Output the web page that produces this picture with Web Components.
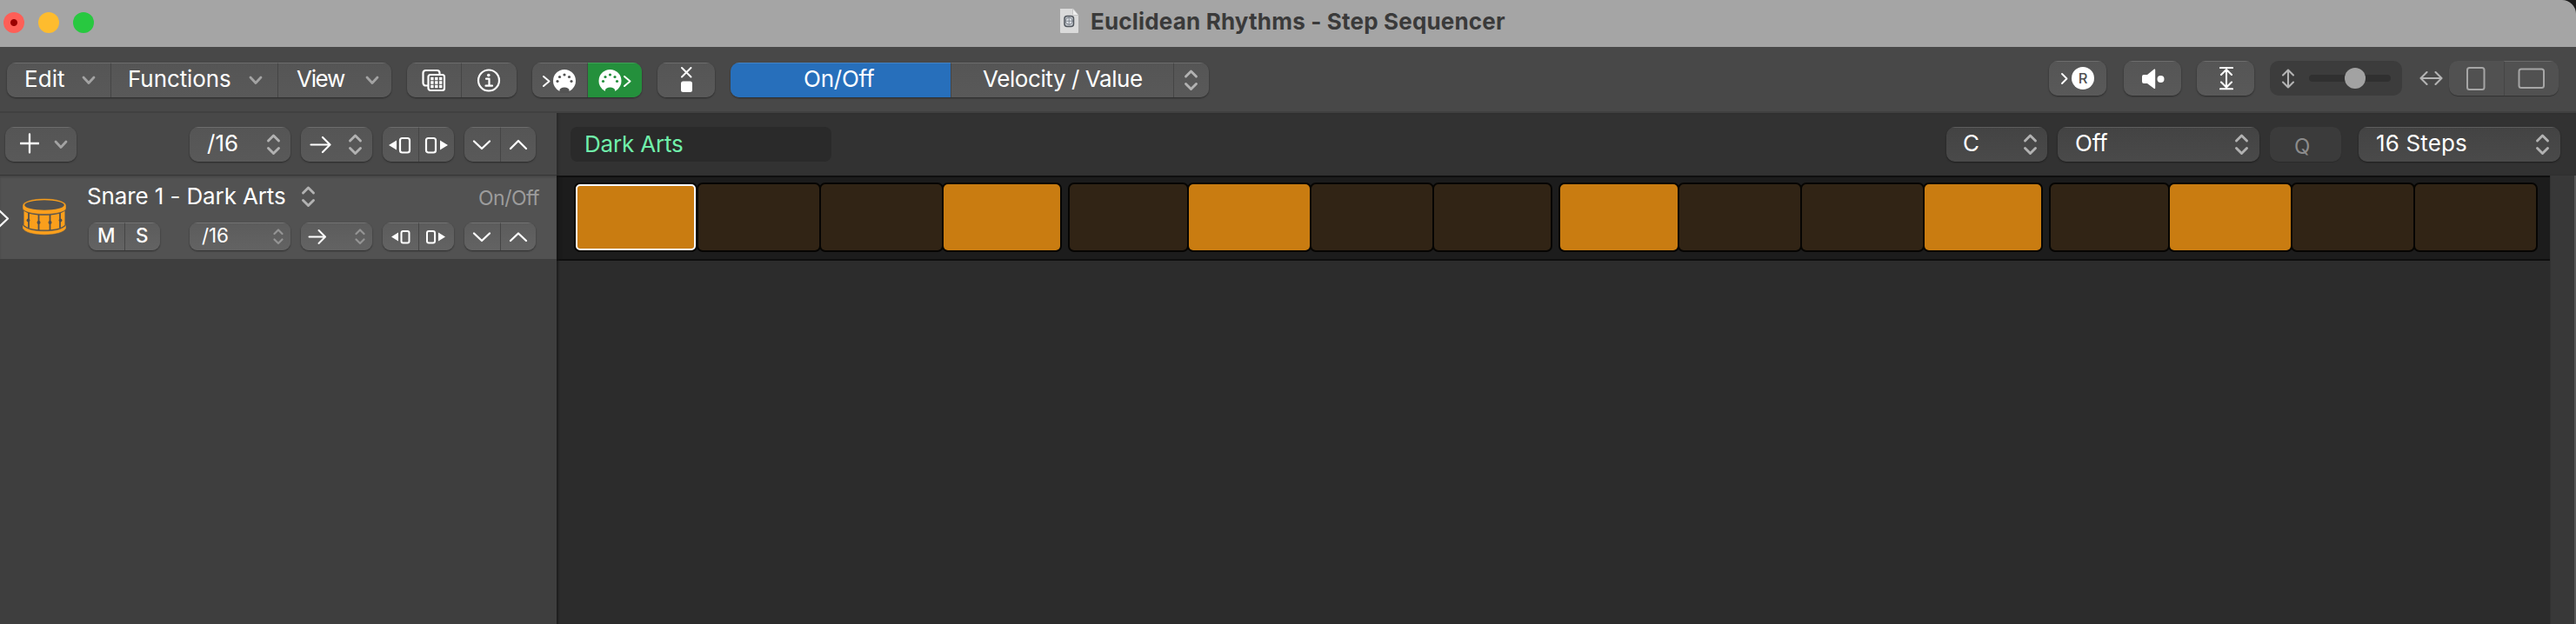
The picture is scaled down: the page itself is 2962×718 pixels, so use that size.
<!DOCTYPE html>
<html lang="en">
<head>
<meta charset="utf-8">
<title>Euclidean Rhythms - Step Sequencer</title>
<style>
  html, body {
    margin: 0;
    height: 100%;
    background: #1b1b1b;
  }
  body {
    font-family: Inter, "Liberation Sans", sans-serif;
    font-size: 26px;
    color: #fff;
    overflow: hidden;
  }
</style>
</head>
<body>
<step-sequencer></step-sequencer>

<script>
const CHEVRON = '#a3a3a3';

// every icon is drawn on a box as tall as its control: [width, height, markup]
const midiPlug = (cx, bg) => `
  <circle cx="${cx}" cy="21" r="13" fill="#fff" stroke="none"/>
  <path d="M${cx - 5.5} 35V31.500a5.500 3 0 0 1 11 0V35z" fill="${bg}" stroke="none"/>
  <g fill="${bg}" stroke="none">
    <circle cx="${cx - 8}" cy="21.500" r="1.600"/><circle cx="${cx - 5.500}" cy="16.500" r="1.600"/>
    <circle cx="${cx}" cy="14" r="1.600"/>
    <circle cx="${cx + 5.500}" cy="16.500" r="1.600"/><circle cx="${cx + 8}" cy="21.500" r="1.600"/>
  </g>`;

const ICONS = {
  'chevron': [16, 40, `<path d="M2 17l6 6.500 6-6.500" stroke="${CHEVRON}" stroke-width="2.800"/>`],
  'updown': [17, 40, '<path d="M2.500 16l6-6 6 6M2.500 24.500l6 6 6-6" stroke="#b2b2b2" stroke-width="2.900"/>'],
  'updown-small': [12, 32, '<path d="M1.500 13l4.500-4.500 4.500 4.500M1.500 19.500l4.500 4.500 4.500-4.500" stroke="#949494" stroke-width="2.200"/>'],
  'plus': [22, 40, '<path d="M.500 19h21M11 8.500v21" stroke-width="2.300"/>'],
  'arrow': [25, 40, '<path d="M1.500 20.500h22M15 12l8.500 8.500-8.500 8.500" stroke-width="2.200"/>'],
  'arrow-small': [22, 32, '<path d="M1.500 16.500h18M12.500 9l7.500 7.500-7.500 7.500" stroke-width="2"/>'],
  'nudge-left': [28, 40, '<path d="M1 21l9-5.500v11z" fill="#fff" stroke="none"/><rect x="14" y="13" width="11" height="16.500" rx="2.500" stroke-width="2.200"/>'],
  'nudge-right': [28, 40, '<path d="M27 21l-9-5.500v11z" fill="#fff" stroke="none"/><rect x="2" y="13" width="11" height="16.500" rx="2.500" stroke-width="2.200"/>'],
  'nudge-left-small': [25, 32, '<path d="M1 16.500l8-5v10z" fill="#fff" stroke="none"/><rect x="12.500" y="10" width="9" height="13.500" rx="2" stroke-width="2"/>'],
  'nudge-right-small': [25, 32, '<path d="M24 16.500l-8-5v10z" fill="#fff" stroke="none"/><rect x="3" y="10" width="9" height="13.500" rx="2" stroke-width="2"/>'],
  'down': [22, 40, '<path d="M2 16.500l9 8.500 9-8.500" stroke-width="2.300"/>'],
  'up': [22, 40, '<path d="M2 25l9-9 9 9" stroke-width="2.300"/>'],
  'down-small': [22, 32, '<path d="M2 12.500l9 8.500 9-8.500" stroke-width="2.300"/>'],
  'up-small': [22, 32, '<path d="M2 21l9-8.500 9 8.500" stroke-width="2.300"/>'],
  'pattern': [28, 40, `
    <path d="M7 26.500H4.500a3 3 0 0 1-3-3V12a3 3 0 0 1 3-3h13a3 3 0 0 1 3 3v1.500" stroke-width="2.200"/>
    <rect x="7.500" y="14" width="18.500" height="18" rx="2.500" stroke-width="2.200"/>
    <path d="M10.200 18.500h13.200M10.200 23h13.200M10.200 27.500h13.200" stroke-width="3.400" stroke-dasharray="3.400 1.500" stroke-linecap="butt"/>`],
  'info': [28, 40, `
    <circle cx="14" cy="20.500" r="12" stroke-width="2.200"/>
    <circle cx="13.800" cy="14.500" r="1.800" fill="#fff" stroke="none"/>
    <path d="M11 18.700h3.500v7.500M10.500 26.700h7.500" stroke-width="2.200"/>`],
  'midi-in': [42, 40, '<path d="M2 16l6.500 5.500L2 27" stroke-width="2"/>' + midiPlug(26, '#535353')],
  'midi-out': [42, 40, '<path d="M32 16l6.500 5.500L32 27" stroke-width="2"/>' + midiPlug(15.5, '#24903c')],
  'erase': [15, 40, '<path d="M2 6l10.500 10.500M12.500 6L2 16.500" stroke-width="2"/><rect x="1" y="21.500" width="13" height="12.500" rx="2.500" fill="#fff" stroke="none"/>'],
  'record': [40, 40, `
    <path d="M2 15l5.500 5.500L2 26" stroke-width="1.900"/>
    <circle cx="26" cy="20" r="13" fill="#fff" stroke="none"/>
    <text x="26" y="26" text-anchor="middle" font-size="16.500" font-weight="500" fill="#505050" stroke="none">R</text>`],
  'speaker': [28, 40, '<path d="M1 18a2 2 0 0 1 2-2h4l8-6.500a.800.800 0 0 1 1.200.700v21a.800.800 0 0 1-1.200.700L7 26H3a2 2 0 0 1-2-2z" fill="#fff" stroke="none"/><circle cx="22.500" cy="21" r="4" fill="#fff" stroke="none"/>'],
  'fit-height': [16, 40, '<path d="M1 8h14M1 32.300h14M8 10v20M2 16l6-6 6 6M2 24.500l6 6 6-6" stroke-width="2.100"/>'],
  'height': [16, 40, '<path d="M8 11v19M2 16.500l6-6 6 6M2 24.500l6 6 6-6" stroke="#b4b4b4" stroke-width="2.100"/>'],
  'width': [27, 40, '<path d="M2 20h23M8.500 13L1.500 20l7 7M18.500 13l7 7-7 7" stroke="#b4b4b4" stroke-width="2.100"/>'],
  'portrait': [22, 40, '<rect x="1" y="8" width="19.500" height="25" rx="2.500" stroke="#a6a6a6" stroke-width="2"/>'],
  'landscape': [32, 40, '<rect x="1.500" y="9.500" width="28.500" height="21.500" rx="2.500" stroke="#a6a6a6" stroke-width="2"/>'],
  'disclosure': [12, 96, '<path d="M-1 40l10 9.500L-1 59" stroke-width="2.200"/>'],
  // rim, shell with tension rods, bottom hoop
  'drum': [52, 44, `
    <path d="M2.500 14.500c4 3.500 13 5.300 23.500 5.300s19.500-1.800 23.500-5.300V31c-4 3.800-13 5.600-23.500 5.600S6.500 34.800 2.500 31z" fill="#fa9f1c" stroke="none"/>
    <path d="M8 17v17.500M19.500 19v18M32.500 19v18M44 17v17.500" stroke="#505050" stroke-width="1.800" stroke-linecap="butt"/>
    <g fill="#505050" stroke="none"><circle cx="7.500" cy="25.500" r="1.900"/><circle cx="19.500" cy="28" r="2"/><circle cx="32.500" cy="28" r="2"/><circle cx="44.500" cy="25.500" r="1.900"/></g>
    <path d="M1 30.500c2.500 4.700 12 7.300 25 7.300s22.500-2.600 25-7.300v4.200c-2.500 4.700-12 7.500-25 7.500S3.500 39.400 1 34.700z" fill="#fa9f1c" stroke="#505050" stroke-width=".500"/>
    <path d="M1 8.500C1 3.800 12 .500 26 .500s25 3.300 25 8v3.200c0 3.900-11 6.800-25 6.800S1 15.600 1 11.700z" fill="#fa9f1c" stroke="#505050" stroke-width=".500"/>
    <ellipse cx="26" cy="8" rx="22.800" ry="5.700" fill="#505050" stroke="none"/>`],
  'document': [26, 30, `
    <path d="M2 1h15l6 7v20a1 1 0 0 1-1 1H3a1 1 0 0 1-1-1V2a1 1 0 0 1 0-1z" fill="#dadada" stroke="none"/>
    <path d="M16.500 1v6.500a1 1 0 0 0 1 1H23z" fill="#eee" stroke="#b9b9b9" stroke-width=".700"/>
    <rect x="7" y="9.500" width="10.500" height="12" rx="3" fill="#c3c8ce" stroke="#51565d" stroke-width="1.500"/>
    <circle cx="12.200" cy="15.200" r="4" fill="#dfe3e8" stroke="#6d737c" stroke-width=".900"/>
    <path d="M12.200 11v8.400M8 15.200h8.400" stroke="#7c828b" stroke-width=".900"/>`]
};

// an icon, placed "start" pixels from the left of its control
class SeqIcon extends HTMLElement {
  constructor() {
    super();
    this.attachShadow({ mode: 'open' });
  }
  connectedCallback() {
    const [w, h, markup] = ICONS[this.getAttribute('name')];
    this.shadowRoot.innerHTML = `
    <style>
      :host {
        display: block;
        flex: none;
        width: ${w}px;
        height: ${h}px;
        margin-left: ${this.getAttribute('start') || 0}px;
      }
      svg {
        display: block;
      }
    </style>
    <svg width="${w}" height="${h}" viewBox="0 0 ${w} ${h}" fill="none" stroke="#fff" stroke-linecap="round" stroke-linejoin="round">${markup}</svg>`;
  }
}
customElements.define('seq-icon', SeqIcon);

// a label whose ink begins at "start" and is tracked out to "span" pixels
class SeqLabel extends HTMLElement {
  constructor() {
    super();
    this.attachShadow({ mode: 'open' });
    this.shadowRoot.innerHTML = `
    <style>
      :host {
        display: block;
        white-space: nowrap;
      }
    </style>
    <slot></slot>`;
  }
  connectedCallback() {
    const text = this.textContent;
    const cs = getComputedStyle(this);
    const ctx = document.createElement('canvas').getContext('2d');
    ctx.font = `${cs.fontWeight} ${cs.fontSize} ${cs.fontFamily}`;
    const m = ctx.measureText(text);
    const ink = m.actualBoundingBoxRight + m.actualBoundingBoxLeft;
    const span = Number(this.getAttribute('span'));
    if (text.length > 1 && span) {
      this.style.letterSpacing = `${(span - ink) / (text.length - 1)}px`;
    }
    this.style.marginLeft = `${Number(this.getAttribute('start')) + m.actualBoundingBoxLeft}px`;
  }
}
customElements.define('seq-label', SeqLabel);

// rounded strip that holds one or more segments
class SeqGroup extends HTMLElement {
  constructor() {
    super();
    this.attachShadow({ mode: 'open' });
    this.shadowRoot.innerHTML = `
    <style>
      :host {
        display: flex;
        flex: none;
        height: 40px;
        border-radius: 10px;
        overflow: hidden;
        background: linear-gradient(#555, #595959);
        box-shadow: 0 1px 2px rgba(0, 0, 0, .45);
        line-height: 38px;
      }
      :host([small]) {
        height: 32px;
        border-radius: 9px;
        background: linear-gradient(#5c5c5c, #636363);
        line-height: 30px;
        font-size: 22.5px;
      }
      :host([dark]) {
        background: linear-gradient(#434343, #4a4a4a);
      }
      :host([disabled]) {
        background: #3b3b3b;
        box-shadow: 0 1px 1px rgba(0, 0, 0, .15);
      }
      :host([dim]) {
        background: #515151;
        box-shadow: 0 1px 1px rgba(0, 0, 0, .3);
      }
    </style>
    <slot></slot>`;
  }
}
customElements.define('seq-group', SeqGroup);

class SeqSegment extends HTMLElement {
  constructor() {
    super();
    this.attachShadow({ mode: 'open' });
    this.shadowRoot.innerHTML = `
    <style>
      :host {
        display: grid;
        box-sizing: border-box;
        flex: none;
        width: var(--w);
        justify-items: start;
        box-shadow: inset 0 1px 0 rgba(255, 255, 255, .14);
      }
      :host(:not(:first-child)) {
        box-shadow: inset 0 1px 0 rgba(255, 255, 255, .14), inset 1px 0 0 #454545;
      }
      :host([tone="blue"]) {
        background: #276fbb;
      }
      :host([tone="green"]) {
        background: #24903c;
      }
      :host([flat]) {
        box-shadow: none;
      }
      ::slotted(*) {
        grid-area: 1 / 1;
      }
    </style>
    <slot></slot>`;
  }
  connectedCallback() {
    this.style.setProperty('--w', `${this.getAttribute('width')}px`);
  }
}
customElements.define('seq-segment', SeqSegment);

class SeqTitlebar extends HTMLElement {
  constructor() {
    super();
    this.attachShadow({ mode: 'open' });
    this.shadowRoot.innerHTML = `
    <style>
      :host {
        display: flex;
        align-items: flex-start;
        box-sizing: border-box;
        height: 54px;
        padding-left: 4px;
        background: #a5a5a5;
        border-radius: 0 16px 0 0;
        color: #3a3a3a;
        font-weight: 700;
        line-height: 50px;
      }
      .lights {
        display: flex;
        gap: 16px;
        width: 1213px;
        padding-top: 14px;
      }
      .lights span {
        width: 24px;
        height: 24px;
        border-radius: 50%;
      }
      .close {
        background: radial-gradient(circle, #9b0000 3.5px, #fe5f57 4.5px);
      }
      .min {
        background: #febc2e;
      }
      .max {
        background: #28c840;
      }
      seq-icon {
        margin-top: 9px;
      }
    </style>
    <div class="lights"><span class="close"></span><span class="min"></span><span class="max"></span></div>
    <seq-icon name="document"></seq-icon>
    <seq-label start="12" span="476">Euclidean Rhythms - Step Sequencer</seq-label>`;
  }
}
customElements.define('seq-titlebar', SeqTitlebar);

class SeqToolbar extends HTMLElement {
  constructor() {
    super();
    this.attachShadow({ mode: 'open' });
    this.shadowRoot.innerHTML = `
    <style>
      :host {
        display: flex;
        justify-content: space-between;
        box-sizing: border-box;
        height: 76px;
        padding: 0 20px 0 8px;
        background: #484848;
        border-bottom: 2px solid #404040;
      }
      .left, .right {
        display: flex;
        align-items: flex-start;
        gap: 18px;
        padding-top: 18px;
      }
      .right {
        gap: 0;
        padding-top: 16px;
      }
      .right > * {
        margin-left: 20px;
      }
      .slider {
        display: grid;
        grid-template-columns: 32px 94px;
        box-sizing: border-box;
        width: 152px;
        height: 40px;
        margin-left: 18px;
        padding-left: 13px;
        border-radius: 10px;
        background: #3c3c3c;
        align-items: center;
      }
      .track {
        display: flex;
        align-items: center;
        height: 8px;
        border-radius: 4px;
        background: #303030;
      }
      .knob {
        width: 24px;
        height: 24px;
        margin-left: 41px;
        border-radius: 50%;
        background: #a2a2a2;
      }
    </style>
    <div class="left">
      <seq-group>
        <seq-segment width="119"><seq-label start="22" span="44">Edit</seq-label><seq-icon name="chevron" start="86"></seq-icon></seq-segment>
        <seq-segment width="192"><seq-label start="22" span="116">Functions</seq-label><seq-icon name="chevron" start="159"></seq-icon></seq-segment>
        <seq-segment width="131"><seq-label start="22" span="56">View</seq-label><seq-icon name="chevron" start="101"></seq-icon></seq-segment>
      </seq-group>
      <seq-group>
        <seq-segment width="62"><seq-icon name="pattern" start="17"></seq-icon></seq-segment>
        <seq-segment width="64"><seq-icon name="info" start="18"></seq-icon></seq-segment>
      </seq-group>
      <seq-group>
        <seq-segment width="63"><seq-icon name="midi-in" start="11"></seq-icon></seq-segment>
        <seq-segment width="63" tone="green"><seq-icon name="midi-out" start="11"></seq-icon></seq-segment>
      </seq-group>
      <seq-group>
        <seq-segment width="66"><seq-icon name="erase" start="26"></seq-icon></seq-segment>
      </seq-group>
      <seq-group>
        <seq-segment width="253" tone="blue"><seq-label start="85" span="81">On/Off</seq-label></seq-segment>
        <seq-segment width="256"><seq-label start="37" span="183">Velocity / Value</seq-label></seq-segment>
        <seq-segment width="41"><seq-icon name="updown" start="12"></seq-icon></seq-segment>
      </seq-group>
    </div>
    <div class="right">
      <seq-group><seq-segment width="66"><seq-icon name="record" start="13"></seq-icon></seq-segment></seq-group>
      <seq-group><seq-segment width="66"><seq-icon name="speaker" start="20"></seq-icon></seq-segment></seq-group>
      <seq-group style="margin-left: 18px"><seq-segment width="66"><seq-icon name="fit-height" start="26"></seq-icon></seq-segment></seq-group>
      <div class="slider">
        <seq-icon name="height"></seq-icon>
        <div class="track"><div class="knob"></div></div>
      </div>
      <seq-icon name="width" start="20"></seq-icon>
      <seq-group dim style="margin-left: 7px">
        <seq-segment width="63" flat><seq-icon name="portrait" start="20"></seq-icon></seq-segment>
        <seq-segment width="63"><seq-icon name="landscape" start="16"></seq-icon></seq-segment>
      </seq-group>
    </div>`;
  }
}
customElements.define('seq-toolbar', SeqToolbar);

class SeqPatternBar extends HTMLElement {
  constructor() {
    super();
    this.attachShadow({ mode: 'open' });
    this.shadowRoot.innerHTML = `
    <style>
      :host {
        display: flex;
        height: 72px;
      }
      .global, .pattern {
        display: flex;
        align-items: flex-start;
        gap: 12px;
        box-sizing: border-box;
        padding-top: 16px;
      }
      .global {
        width: 640px;
        padding-left: 6px;
        background: #484848;
        border-bottom: 1px solid #363636;
      }
      .add {
        margin-right: 118px;
      }
      .pattern {
        flex: 1;
        padding-left: 16px;
        padding-right: 18px;
        background: #323232;
        box-shadow: inset 3px 0 3px -1px #292929;
      }
      .name {
        width: 300px;
        height: 40px;
        margin-right: auto;
        border-radius: 8px;
        background: #2a2a2a;
        color: #70f0ab;
        line-height: 40px;
      }
      .q {
        color: #8c8c8c;
        line-height: 46px;
        font-size: 24px;
      }
    </style>
    <div class="global">
      <seq-group class="add"><seq-segment width="82"><seq-icon name="plus" start="17"></seq-icon><seq-icon name="chevron" start="56"></seq-icon></seq-segment></seq-group>
      <seq-group><seq-segment width="116"><seq-label start="20" span="35">/16</seq-label><seq-icon name="updown" start="88"></seq-icon></seq-segment></seq-group>
      <seq-group><seq-segment width="82"><seq-icon name="arrow" start="10"></seq-icon><seq-icon name="updown" start="54"></seq-icon></seq-segment></seq-group>
      <seq-group>
        <seq-segment width="41"><seq-icon name="nudge-left" start="6"></seq-icon></seq-segment>
        <seq-segment width="41"><seq-icon name="nudge-right" start="7"></seq-icon></seq-segment>
      </seq-group>
      <seq-group>
        <seq-segment width="41"><seq-icon name="down" start="9"></seq-icon></seq-segment>
        <seq-segment width="41"><seq-icon name="up" start="10"></seq-icon></seq-segment>
      </seq-group>
    </div>
    <div class="pattern">
      <div class="name"><seq-label start="18" span="111">Dark Arts</seq-label></div>
      <seq-group dark><seq-segment width="116"><seq-label start="20">C</seq-label><seq-icon name="updown" start="88"></seq-icon></seq-segment></seq-group>
      <seq-group dark><seq-segment width="232"><seq-label start="21" span="37">Off</seq-label><seq-icon name="updown" start="203"></seq-icon></seq-segment></seq-group>
      <seq-group disabled style="margin-right: 8px"><seq-segment width="82" flat><seq-label class="q" start="29">Q</seq-label></seq-segment></seq-group>
      <seq-group dark><seq-segment width="232"><seq-label start="21" span="103">16 Steps</seq-label><seq-icon name="updown" start="203"></seq-icon></seq-segment></seq-group>
    </div>`;
  }
}
customElements.define('seq-pattern-bar', SeqPatternBar);

class SeqTrackHeader extends HTMLElement {
  constructor() {
    super();
    this.attachShadow({ mode: 'open' });
    this.shadowRoot.innerHTML = `
    <style>
      :host {
        display: flex;
        box-sizing: border-box;
        height: 96px;
        background: #525252;
        box-shadow: inset 0 2px 2px #464646;
      }
      .drum {
        margin: 26px 0 0 13px;
      }
      .body {
        width: 514px;
        margin-left: 25px;
      }
      .title {
        display: flex;
        height: 54px;
        line-height: 48px;
      }
      .mode {
        margin: 0 -4px 0 auto;
        color: #9c9c9c;
        font-size: 23px;
        line-height: 52px;
      }
      .controls {
        display: flex;
        gap: 12px;
      }
      .mute {
        margin-right: 22px;
        font-weight: 500;
      }
    </style>
    <seq-icon name="disclosure"></seq-icon>
    <seq-icon class="drum" name="drum"></seq-icon>
    <div class="body">
      <div class="title">
        <seq-label start="-1" span="227">Snare 1 - Dark Arts</seq-label>
        <seq-icon name="updown" start="17" style="margin-top: 4px"></seq-icon>
        <div class="mode"><seq-label start="0" span="70">On/Off</seq-label></div>
      </div>
      <div class="controls">
        <seq-group small class="mute">
          <seq-segment width="41"><seq-label start="11">M</seq-label></seq-segment>
          <seq-segment width="41"><seq-label start="14">S</seq-label></seq-segment>
        </seq-group>
        <seq-group small><seq-segment width="116"><seq-label start="14" span="30">/16</seq-label><seq-icon name="updown-small" start="96"></seq-icon></seq-segment></seq-group>
        <seq-group small><seq-segment width="82"><seq-icon name="arrow-small" start="8"></seq-icon><seq-icon name="updown-small" start="62"></seq-icon></seq-segment></seq-group>
        <seq-group small>
          <seq-segment width="41"><seq-icon name="nudge-left-small" start="9"></seq-icon></seq-segment>
          <seq-segment width="41"><seq-icon name="nudge-right-small" start="7"></seq-icon></seq-segment>
        </seq-group>
        <seq-group small>
          <seq-segment width="41"><seq-icon name="down-small" start="9"></seq-icon></seq-segment>
          <seq-segment width="41"><seq-icon name="up-small" start="10"></seq-icon></seq-segment>
        </seq-group>
      </div>
    </div>`;
  }
}
customElements.define('seq-track-header', SeqTrackHeader);

class SeqSteps extends HTMLElement {
  constructor() {
    super();
    this.attachShadow({ mode: 'open' });
  }
  connectedCallback() {
    // 1 = step on, beats of four steps
    const beats = this.getAttribute('pattern').split(' ');
    this.shadowRoot.innerHTML = `
    <style>
      :host {
        display: flex;
        gap: 11px;
        box-sizing: border-box;
        height: 98px;
        padding: 10px 0 0 22px;
        background: #1c1c1c;
        box-shadow: inset 5px 0 4px -3px #111, inset 0 2px 0 #101010, inset 0 -2px 0 #101010;
      }
      .beat {
        display: grid;
        grid-template-columns: 135px 139px 139px 134px;
        grid-auto-rows: 76px;
        column-gap: 2px;
      }
      .beat:first-of-type {
        grid-template-columns: 139px 139px 139px 134px;
      }
      .beat:last-of-type {
        grid-template-columns: 135px 139px 139px 139px;
      }
      .step {
        border-radius: 5px;
        background: #312415;
        box-shadow: 0 0 0 2px #060503;
      }
      .on {
        background: #c97c11;
      }
      .beat:first-of-type .step:first-child {
        margin-right: 1px;
        border: 2px solid #fff;
      }
    </style>
    ${beats.map((beat) => `<div class="beat">${[...beat].map((s) => `<div class="step${s === '1' ? ' on' : ''}"></div>`).join('')}</div>`).join('')}`;
  }
}
customElements.define('seq-steps', SeqSteps);

class StepSequencer extends HTMLElement {
  constructor() {
    super();
    this.attachShadow({ mode: 'open' });
    this.shadowRoot.innerHTML = `
    <style>
      :host {
        display: flex;
        flex-direction: column;
        width: 2962px;
        height: 718px;
      }
      .main {
        display: flex;
        flex: 1;
      }
      .tracks {
        width: 640px;
        background: #3e3e3e;
      }
      .grid {
        flex: 1;
        background: #2c2c2c;
        box-shadow: inset 3px 0 2px -1px #1d1d1d;
      }
      .scroll {
        width: 27px;
        background: #383838;
        border-left: 1px solid #323232;
        border-right: 2px solid #575757;
      }
    </style>
    <seq-titlebar></seq-titlebar>
    <seq-toolbar></seq-toolbar>
    <seq-pattern-bar></seq-pattern-bar>
    <div class="main">
      <div class="tracks"><seq-track-header></seq-track-header></div>
      <div class="grid"><seq-steps pattern="1001 0100 1001 0100"></seq-steps></div>
      <div class="scroll"></div>
    </div>`;
  }
}
customElements.define('step-sequencer', StepSequencer);
</script>
</body>
</html>
